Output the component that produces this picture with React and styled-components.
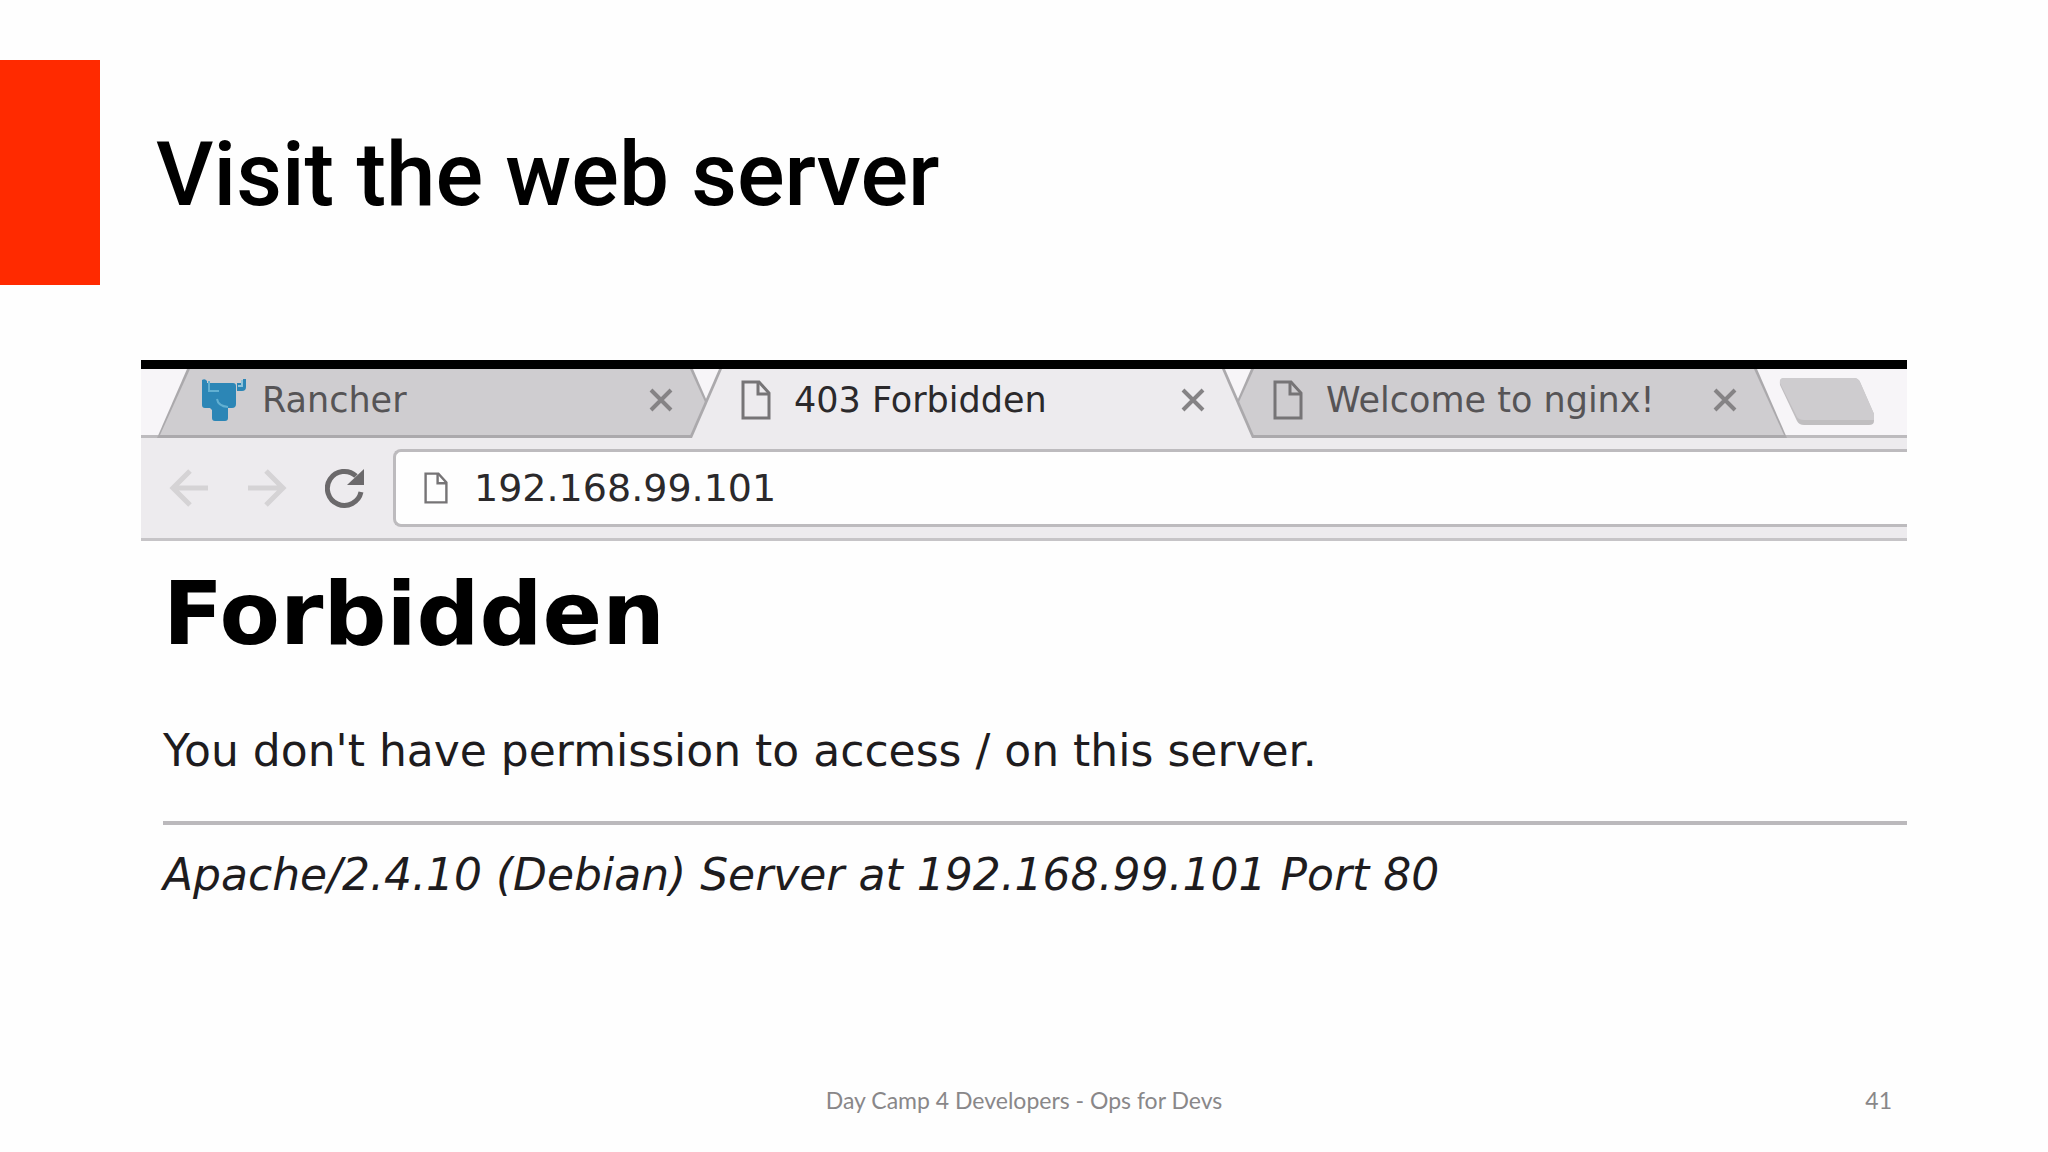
import styled, { createGlobalStyle, css } from 'styled-components';

export default function App(){
    return (
    <Slide>
        <GlobalStyle />
        <Header>
            <Accent />
            <Title>Visit the web server</Title>
        </Header>
        <Browser>
            <TabStrip>
                <Tab>
                    <TabIcon><RancherIcon /></TabIcon>
                    <TabName>Rancher</TabName>
                    <CloseTab aria-label="Close Rancher"><CloseIcon /></CloseTab>
                </Tab>
                <Tab $active>
                    <TabIcon><PageIcon width="30" height="40" /></TabIcon>
                    <TabName>403 Forbidden</TabName>
                    <CloseTab aria-label="Close 403 Forbidden"><CloseIcon /></CloseTab>
                </Tab>
                <Tab>
                    <TabIcon><PageIcon width="30" height="40" /></TabIcon>
                    <TabName>Welcome to nginx!</TabName>
                    <CloseTab aria-label="Close Welcome to nginx!"><CloseIcon /></CloseTab>
                </Tab>
                <NewTab aria-label="New tab">
                    <svg width="96" height="50" viewBox="0 0 96 50">
                        <path d="M5 1H75Q79 1 81 5L95 37V44Q95 48 90 48H25Q20 48 18 44L1 8Q0 1 5 1Z" fill="#c0bec0" />
                        <path d="M5 1H75Q79 1 81 5L95 37V43H25Q20 43 18 40L1 6Q0 1 5 1Z" fill="#cecccf" />
                    </svg>
                </NewTab>
            </TabStrip>
            <Toolbar>
                <NavButtons>
                    <NavButton aria-label="Back" disabled><ArrowIcon d="M39 20H4M21 3L4 20L21 37" /></NavButton>
                    <NavButton aria-label="Forward" disabled><ArrowIcon d="M1 20H36M19 3L36 20L19 37" /></NavButton>
                    <NavButton aria-label="Reload"><ReloadIcon /></NavButton>
                </NavButtons>
                <AddressBar>
                    <PageIcon width="24" height="32" />
                    <input aria-label="Address" type="text" defaultValue="192.168.99.101" />
                </AddressBar>
            </Toolbar>
            <Page>
                <h1>Forbidden</h1>
                <p>You don't have permission to access / on this server.</p>
                <hr />
                <address>Apache/2.4.10 (Debian) Server at 192.168.99.101 Port 80</address>
            </Page>
        </Browser>
        <Footer>
            <span>Day Camp 4 Developers - Ops for Devs</span>
            <PageNumber>41</PageNumber>
        </Footer>
    </Slide>
    )
}

function PageIcon({ width, height }){
    return (
    <svg width={width} height={height} viewBox="0 0 30 40" fill="none" stroke="#767476" strokeWidth="3">
        <path d="M2 2H18L28 13V38H2Z" />
        <path d="M17 2V14H28" />
    </svg>
    )
}

function RancherIcon(){
    return (
    <svg width="46" height="44" viewBox="0 0 46 44">
        <path d="M1 2Q4 0 6 3V5H32Q35 5 35 8V26Q35 30 31 30H27V40Q27 43 24 43H14Q11 43 11 40V32L9 30H4Q1 30 1 27Z" fill="#2c86b6" />
        <path d="M36 5H40V8H42V1H45V9Q45 13 41 13H36Z" fill="#2c86b6" />
        <path d="M8 3V13H18M16 21Q17 28 27 29" fill="none" stroke="#62b0d2" strokeWidth="2" />
        <path d="M41 2V8H37" fill="none" stroke="#8fc3da" strokeWidth="2" />
    </svg>
    )
}

function CloseIcon(){
    return (
    <svg width="24" height="24" viewBox="0 0 24 24" stroke="#858385" strokeWidth="4">
        <path d="M2 2L22 22M22 2L2 22" />
    </svg>
    )
}

function ArrowIcon({ d }){
    return (
    <svg width="40" height="40" viewBox="0 0 40 40" fill="none" stroke="#d5d3d5" strokeWidth="5">
        <path d={d} />
    </svg>
    )
}

function ReloadIcon(){
    return (
    <svg width="40" height="40" viewBox="0 0 40 40">
        <path d="M36 24A17 17 0 1 1 31 8" fill="none" stroke="#6b696b" strokeWidth="5" />
        <path d="M39 1V17H22Z" fill="#6b696b" />
    </svg>
    )
}

const GlobalStyle = createGlobalStyle`
    body {
        margin: 0;
        background-color: #FEFEFE;
    }

    * {
        box-sizing: border-box;
    }

    button {
        padding: 0;
        border: 0;
        background: none;
        cursor: pointer;
    }

    svg {
        display: block;
        flex-shrink: 0;
    }
`

const Slide = styled.div`
    min-height: 100vh;
    padding-top: 60px;
    display: flex;
    flex-direction: column;
`

const Header = styled.header`
    display: flex;
    align-items: center;
    gap: 56px;
    margin-bottom: 75px;
`

const Accent = styled.div`
    width: 100px;
    height: 225px;
    background-color: #FF2A00;
`

const Title = styled.h1`
    margin: 0;
    padding-top: 4px;
    font-family: Roboto, sans-serif;
    font-size: 89px;
    line-height: 100px;
    font-weight: 500;
    color: #000000;
`

const Browser = styled.section`
    margin: 0 141px;
    border-top: 9px solid #000000;
    font-family: 'DejaVu Sans', sans-serif;
    overflow: hidden;
`

const TabStrip = styled.div`
    height: 69px;
    padding-left: 16px;
    display: flex;
    background-color: #F7F5F8;
    box-shadow: inset 0 -3px #BDBBBE;
`

const tabShape = css`
    content: '';
    position: absolute;
    z-index: -1;
    clip-path: polygon(30px 0, calc(100% - 30px) 0, 100% 100%, 0 100%);
`

/* before = outline, after = fill */
const Tab = styled.div`
    position: relative;
    z-index: ${props => props.$active ? 2 : 1};
    flex: 0 1 566px;
    min-width: 0;
    padding: 0 50px 8px 43px;
    display: flex;
    align-items: center;
    gap: 14px;
    color: ${props => props.$active ? '#2B292B' : '#565456'};

    & + & {
        margin-left: -34px;
    }

    &::before {
        ${tabShape}
        inset: 0;
        background-color: #ABA9AC;
    }

    &::after {
        ${tabShape}
        inset: 0 3px ${props => props.$active ? '0' : '3px'} 3px;
        background-color: ${props => props.$active ? '#EDEBEE' : '#CFCDD0'};
    }
`

const TabIcon = styled.span`
    width: 48px;
    display: flex;
    justify-content: center;
`

const TabName = styled.span`
    flex: 1;
    font-size: 35px;
    line-height: 42px;
    white-space: nowrap;
    overflow: hidden;
`

const CloseTab = styled.button`
    width: 24px;
    height: 24px;
`

const NewTab = styled.button`
    height: 50px;
    margin: 8px 0 0 -8px;
`

const Toolbar = styled.div`
    padding: 11px 0 11px 28px;
    display: flex;
    align-items: center;
    gap: 28px;
    background-color: #EDEBEE;
    border-bottom: 3px solid #C6C4C7;
`

const NavButtons = styled.div`
    display: flex;
    gap: 38px;
`

const NavButton = styled.button`
    width: 40px;
    height: 40px;
`

const AddressBar = styled.label`
    flex: 1;
    height: 78px;
    padding-left: 28px;
    display: flex;
    align-items: center;
    gap: 26px;
    background-color: #FEFEFE;
    border: 3px solid #BDBBBE;
    border-right: 0;
    border-radius: 8px 0 0 8px;

    input {
        flex: 1;
        min-width: 0;
        padding: 0;
        border: 0;
        outline: 0;
        background: none;
        color: #2B292B;
        font-family: inherit;
        font-size: 38px;
        line-height: 44px;
    }
`

const Page = styled.main`
    padding: 23px 0 0 22px;
    color: #1E1C1E;
    font-size: 44px;
    line-height: 50px;

    h1 {
        margin: 0 0 62px;
        color: #000000;
        font-size: 88px;
        line-height: 100px;
        font-weight: 700;
    }

    p {
        margin: 0 0 45px;
    }

    hr {
        height: 4px;
        margin: 0 0 25px;
        border: 0;
        background-color: #BBB9BC;
    }

    address {
        font-style: italic;
    }
`

const Footer = styled.footer`
    margin-top: auto;
    padding: 0 156px 37px;
    display: grid;
    grid-template-columns: 1fr auto 1fr;
    color: #898789;
    font-family: Lato, sans-serif;
    font-size: 23px;
    line-height: 30px;

    span:first-child {
        grid-column: 2;
    }
`

const PageNumber = styled.span`
    text-align: right;
`
